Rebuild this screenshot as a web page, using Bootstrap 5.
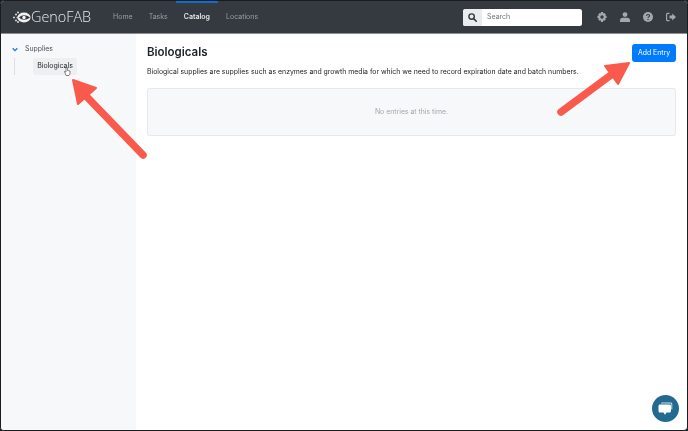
<!DOCTYPE html>
<html lang="en">
<head>
<meta charset="UTF-8" />
<meta name="viewport" content="width=device-width, initial-scale=1.0" />
<title>GenoFAB Catalog</title>
<link href="https://cdn.jsdelivr.net/npm/bootstrap@5.3.0/dist/css/bootstrap.min.css" rel="stylesheet" />
<style>
html, body { height: 100%; overflow: hidden; background: #1b1c1e; }
body { font-family: Inter, "Liberation Sans", sans-serif; font-size: 7px; color: #212529; }
.app-frame { height: 431px; border: 1px solid #1b1c1e; border-radius: 4px; overflow: hidden; background: #fff; will-change: transform; }
.top-bar { height: 33px; background: #343a40; border-bottom: 1px solid #8b8e91; padding: 0; }
.brand-box { width: 104px; padding-left: 12px; color: #e9eaeb; font-size: 14.4px; font-weight: 300; line-height: 1; font-family: "Open Sans", "Liberation Sans", sans-serif; }
.top-link { height: 32px; padding: 0 8px; color: #9a9ea2; font-size: 7px; text-decoration: none; }
.top-link.is-on { color: #e6e7e8; font-weight: 600; position: relative; }
.top-link.is-on::before { content: ""; position: absolute; top: 0; left: 0; right: 0; height: 2px; background: #0d6ecb; }
.top-search { width: 119px; height: 17px; border-radius: 2.5px; overflow: hidden; background: #fff; }
.search-addon { width: 19px; background: #e9ecef; }
.search-text { padding-left: 5px; color: #6c757d; font-size: 7px; }
.top-icons { gap: 13px; margin-left: 15px; padding-right: 11px; }
.side-col { width: 135px; background: #f7f8fa; padding: 8px 0 0 11px; }
.tree-root { height: 14px; gap: 7px; color: #495057; font-size: 6.9px; }
.tree-kids { margin: 2px 0 0 2px; padding-left: 18px; height: 17px; border-left: 1px solid #dde0e3; }
.tree-leaf { width: 44px; height: 17px; background: #eeeff0; border-radius: 2.5px; color: #212529; font-size: 7px; }
.main-col { padding: 10px 11px 0 11px; }
.page-title { font-size: 11.5px; font-weight: 600; margin: 0; line-height: 17px; }
.add-btn { --bs-btn-padding-x: 0; --bs-btn-padding-y: 0; --bs-btn-font-size: 6.9px; --bs-btn-border-radius: 2.5px; --bs-btn-bg: #007bff; --bs-btn-border-color: #007bff; width: 44px; height: 18px; }
.lead-line { margin: 5px 0 0; font-size: 6.9px; line-height: 10px; white-space: nowrap; }
.empty-well { height: 48px; margin-top: 11px; background: #f7f8fa; border: 1px solid #e6e8ea; border-radius: 2.5px; color: #a3a8ad; font-size: 6.9px; }
.chat-bubble { position: absolute; right: 8px; bottom: 8px; width: 27px; height: 27px; border-radius: 50%; background: #236a93; }
.arrow-layer { position: absolute; left: 0; top: 0; width: 688px; height: 431px; pointer-events: none; }
</style>
</head>
<body>
<div class="app-frame d-flex flex-column position-relative">
    <nav class="top-bar d-flex align-items-center flex-shrink-0">
        <div class="brand-box d-flex align-items-center flex-shrink-0">
            <svg width="18" height="13" viewBox="0 0 18 13">
                <ellipse cx="11" cy="6.5" rx="6.5" ry="5" fill="#f0f0f0" />
                <path d="M6 6.5c3-3 7-3 11 0c-4 3-8 3-11 0z" fill="#343a40" />
                <circle cx="11" cy="6.5" r="1.7" fill="#f0f0f0" />
                <g fill="#d8d9da">
                    <circle cx="1" cy="6.5" r="1" /><circle cx="3" cy="3.5" r="1" /><circle cx="3" cy="9.5" r="1" />
                    <circle cx="5" cy="1.5" r="1" /><circle cx="5" cy="11" r="1" /><circle cx="4.5" cy="6.5" r="1" />
                </g>
            </svg>
            <span>GenoFAB</span>
        </div>
        <a class="top-link d-flex align-items-center justify-content-center" href="#">Home</a>
        <a class="top-link d-flex align-items-center justify-content-center" href="#">Tasks</a>
        <a class="top-link is-on d-flex align-items-center justify-content-center" href="#">Catalog</a>
        <a class="top-link d-flex align-items-center justify-content-center" href="#">Locations</a>
        <div class="top-search d-flex ms-auto">
            <span class="search-addon d-flex align-items-center justify-content-center">
                <svg width="9" height="9" viewBox="0 0 10 10"><circle cx="4" cy="4" r="3" fill="none" stroke="#343a40" stroke-width="1.6" /><path d="M6.3 6.3 9.2 9.2" stroke="#343a40" stroke-width="1.8" stroke-linecap="round" /></svg>
            </span>
            <span class="search-text d-flex align-items-center">Search</span>
        </div>
        <div class="top-icons d-flex align-items-center">
            <svg width="10" height="10" viewBox="0 0 10 10"><path fill="#a5a8ab" fill-rule="evenodd" d="M4 0h2l.3 1.4 1-.5 1.5 1.3-.6 1.1L9.6 4v2l-1.4.3.6 1.2-1.5 1.3-1-.6L6 10H4l-.3-1.8-1 .6-1.5-1.3.6-1.2L.4 6V4l1.4-.4-.6-1.1L2.7.9l1 .5zM5 3.3a1.7 1.7 0 1 0 0 3.4 1.7 1.7 0 0 0 0-3.4z" /></svg>
            <svg width="10" height="10" viewBox="0 0 10 10"><circle cx="5" cy="2.6" r="2.4" fill="#a5a8ab" /><path fill="#a5a8ab" d="M0 10V8.2C0 6.8 1.2 5.8 2.6 5.8h4.8C8.8 5.8 10 6.8 10 8.2V10z" /></svg>
            <svg width="10" height="10" viewBox="0 0 10 10"><circle cx="5" cy="5" r="5" fill="#a5a8ab" /><path d="M3.4 3.9C3.5 2.9 4.2 2.5 5 2.5c.9 0 1.6.5 1.6 1.3C6.6 4.9 5 4.9 5 6" fill="none" stroke="#343a40" stroke-width="1.1" /><circle cx="5" cy="7.5" r=".7" fill="#343a40" /></svg>
            <svg width="10" height="10" viewBox="0 0 10 10"><path fill="none" stroke="#a5a8ab" stroke-width="1.2" d="M3.5 1.3H1.6C1 1.3.6 1.7.6 2.3v5.4c0 .6.4 1 1 1h1.9" /><path fill="#a5a8ab" d="M3.5 3.6h2.7V1.5L10 5 6.2 8.5V6.4H3.5z" /></svg>
        </div>
    </nav>

    <div class="d-flex flex-grow-1">
        <aside class="side-col flex-shrink-0">
            <div class="tree-root d-flex align-items-center">
                <svg width="6" height="5" viewBox="0 0 7 5"><path d="M.8 1 3.5 3.8 6.2 1" fill="none" stroke="#1679e0" stroke-width="1.5" /></svg>
                <span>Supplies</span>
            </div>
            <div class="tree-kids">
                <div class="tree-leaf d-flex align-items-center justify-content-center">Biologicals</div>
            </div>
        </aside>
        <main class="main-col flex-grow-1">
            <div class="d-flex justify-content-between align-items-start">
                <h1 class="page-title">Biologicals</h1>
                <button type="button" class="btn btn-primary add-btn">Add Entry</button>
            </div>
            <p class="lead-line">Biological supplies are supplies such as enzymes and growth media for which we need to record expiration date and batch numbers.</p>
            <div class="empty-well d-flex align-items-center justify-content-center">No entries at this time.</div>
        </main>
    </div>

    <div class="chat-bubble d-flex align-items-center justify-content-center">
        <svg width="15" height="14" viewBox="0 0 15 14">
            <path d="M3 1.5C3 .8 3.5.4 4.2.4h8.4c1 0 1.7.7 1.7 1.7v5.5h-1V2.4c0-.6-.4-1-1-1z" fill="#cfe0ea" />
            <path d="M2 2.4h9.500c.9 0 1.500.6 1.500 1.500v5c0 .9-.6 1.500-1.500 1.500H8.600L7 12.800 5.400 10.400H2c-.9 0-1.500-.6-1.500-1.500v-5c0-.9.6-1.500 1.500-1.500z" fill="#fff" />
        </svg>
    </div>
</div>

<!-- callout arrows -->
<svg class="arrow-layer" viewBox="0 0 688 431">
    <g fill="#fa5a4b" stroke="#fa5a4b" stroke-linejoin="round">
        <path d="M143 155 87 97" fill="none" stroke-width="7.5" stroke-linecap="round" />
        <path d="M73 80 96 88 78 104z" stroke-width="2" />
        <path d="M561 112 615 72" fill="none" stroke-width="7.5" stroke-linecap="round" />
        <path d="M629 63 605 66 618 84z" stroke-width="2" />
    </g>
    <g fill="#fff" stroke="#555" stroke-width=".7">
        <path d="M66 67.5h1.5v3l2.5.5v3l-1 1.5h-3L64.5 71.5l1.5.5z" />
    </g>
</svg>
<script src="https://cdn.jsdelivr.net/npm/bootstrap@5.3.0/dist/js/bootstrap.bundle.min.js"></script>
</body>
</html>
